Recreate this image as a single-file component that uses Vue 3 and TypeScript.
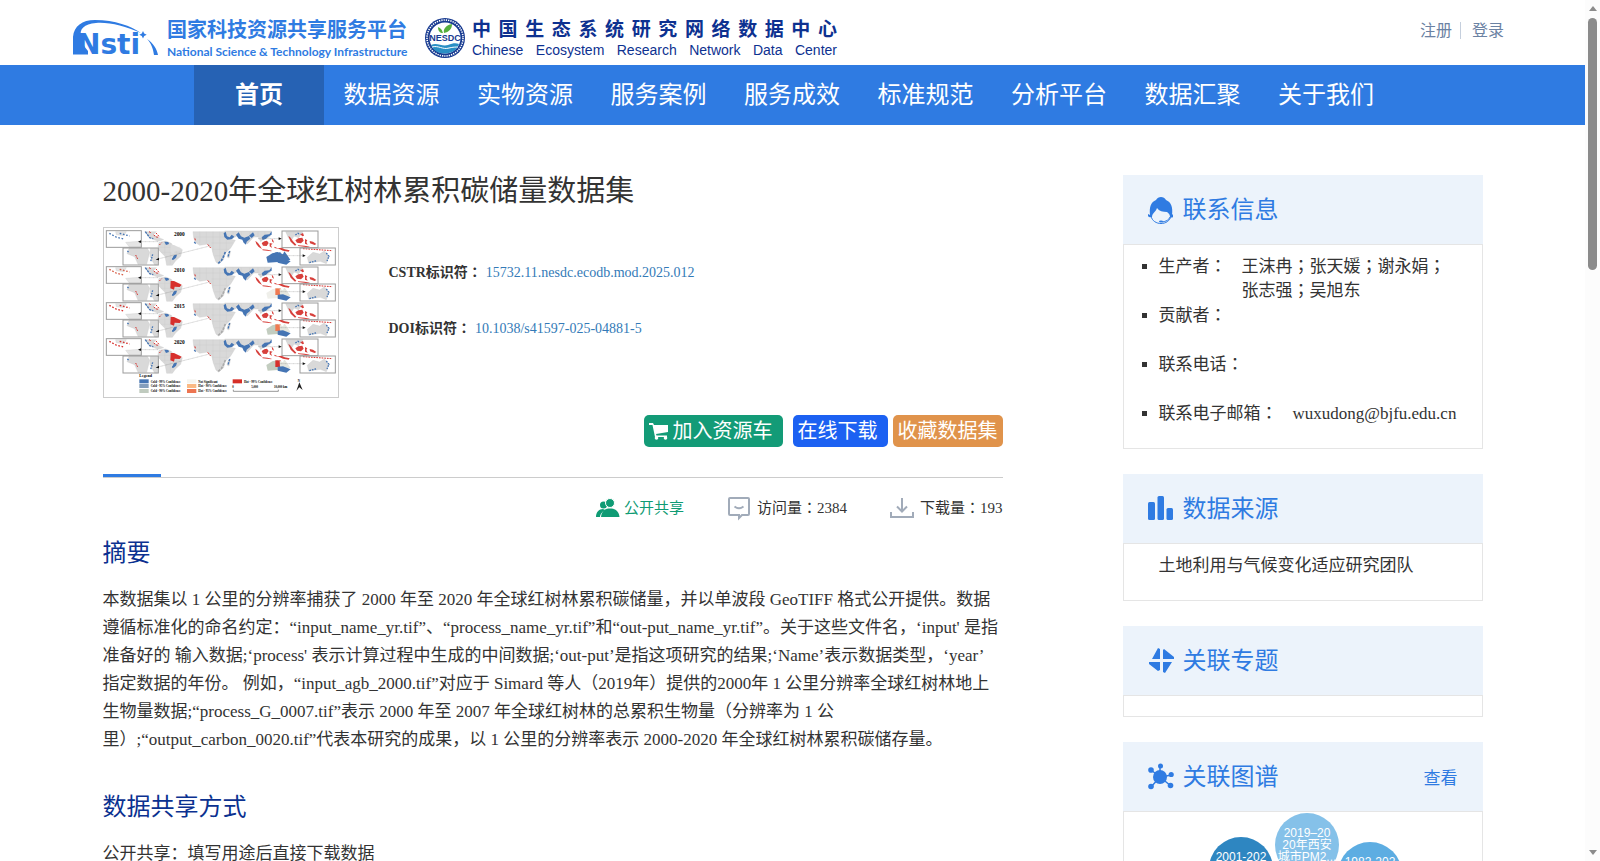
<script setup lang="ts">
interface Contact {
  label: string
  value: string
}
interface Bubble {
  x: number
  y: number
  fill: string
  lines: string[]
}
interface MapRow {
  year: string
  brazil: string
  west: string
  middle: string
  south: string
  inset: string
}

const menu: string[] = ['首页', '数据资源', '实物资源', '服务案例', '服务成效', '标准规范', '分析平台', '数据汇聚', '关于我们']

const contacts: Contact[] = [
  { label: '生产者：', value: '王沫冉；张天媛；谢永娟；张志强；吴旭东' },
  { label: '贡献者：', value: '' },
  { label: '联系电话：', value: '' },
  { label: '联系电子邮箱：', value: 'wuxudong@bjfu.edu.cn' },
]

const bubbles: Bubble[] = [
  { x: 117, y: 57, fill: '#2e86c1', lines: ['2001-202'] },
  { x: 183, y: 33, fill: '#85c1e9', lines: ['2019–20', '20年西安', '城市PM2...'] },
  { x: 246, y: 62, fill: '#5dade2', lines: ['1982-202'] },
]

const mapRows: MapRow[] = [
  { year: '2000', brazil: '#dcdcdc', west: '#4575b4', middle: '#4575b4', south: '#4575b4', inset: '#4575b4' },
  { year: '2010', brazil: '#d7302c', west: '#efefea', middle: '#ef7a52', south: '#4575b4', inset: '#d7604a' },
  { year: '2015', brazil: '#d7302c', west: '#c3cdc0', middle: '#ef7a52', south: '#4575b4', inset: '#d7302c' },
  { year: '2020', brazil: '#d7302c', west: '#c3cdc0', middle: '#d7302c', south: '#4575b4', inset: '#d7302c' },
]

const legend = [
  { x: 149, y: 493, fill: '#4575b4', text: 'Cold - 99% Confidence' },
  { x: 149, y: 507, fill: '#849ebc', text: 'Cold - 95% Confidence' },
  { x: 149, y: 522, fill: '#c0cbbf', text: 'Cold - 90% Confidence' },
  { x: 292, y: 493, fill: '#f5f5f0', text: 'Not Significant' },
  { x: 292, y: 507, fill: '#fab984', text: 'Hot - 90% Confidence' },
  { x: 292, y: 522, fill: '#ed7551', text: 'Hot - 95% Confidence' },
  { x: 429, y: 493, fill: '#d62f27', text: 'Hot - 99% Confidence' },
]
</script>

<template>
  <div class="shell">
    <div class="page">
      <header class="top">
        <div class="brands">
          <a class="brand" href="#">
            <svg class="nsti" viewBox="0 0 86 36" width="86" height="36" aria-hidden="true">
              <path d="M0 34.500V17C1 6 9 0 22 0C42 0 58 6 68 13C52 6 36 2 23 3C11 4 6 9 8 17C9 22 11 27 15 31V34.500Z" fill="#2f7be2" />
              <text x="4" y="34" class="nsti-word">Nsti</text>
              <path d="M70 11l1.200 2.500 2.500 1.200-2.500 1.200L70 18.500l-1.200-2.600-2.500-1.200 2.500-1.200Z" fill="#2f7be2" />
              <path d="M74 19C80 23 84 29 85 35H81C80 28 78 23 74 19Z" fill="#2f7be2" />
            </svg>
            <span class="platform">
              <strong>国家科技资源共享服务平台</strong>
              <span>National Science &amp; Technology Infrastructure</span>
            </span>
          </a>
          <a class="brand" href="#">
            <svg class="seal" viewBox="0 0 40 40" width="40" height="40" aria-hidden="true">
              <circle cx="20" cy="20" r="20" fill="#173a90" />
              <circle cx="20" cy="20" r="18" fill="none" stroke="#fff" stroke-width="1.6" stroke-dasharray="1.3 1" />
              <circle cx="20" cy="20" r="15.5" fill="#fff" />
              <path d="M6 27C12 24 17 29 23 27C28 25 31 25 34 26C32 32 27 35.500 20 35.500C13 35.500 8 32 6 27Z" fill="#2a8fc4" />
              <path d="M7 29C13 27 18 32 24 30C28 29 31 29 33 29" fill="none" stroke="#fff" />
              <path d="M19 15C18 11 21 7 27 6C27 11 24 14 19 15ZM18 15C17 11 15 10 13 9C13 13 15 15 18 15Z" fill="#55ae3d" />
              <text x="20" y="23" text-anchor="middle" class="seal-word">NESDC</text>
            </svg>
            <span class="center-name">
              <strong>中国生态系统研究网络数据中心</strong>
              <span>Chinese Ecosystem Research Network Data Center</span>
            </span>
          </a>
        </div>
        <div class="account">
          <a href="#">注册</a>
          <a href="#">登录</a>
        </div>
      </header>

      <nav class="nav" aria-label="主导航">
        <ul>
          <li v-for="(item, i) in menu" :key="item" :class="{ active: i === 0 }"><a href="#">{{ item }}</a></li>
        </ul>
      </nav>

      <main class="content">
        <article>
          <h1>2000-2020年全球红树林累积碳储量数据集</h1>
          <div class="summary">
            <svg class="thumb" viewBox="43 39 702 507" role="img" aria-label="全球红树林分布图">
              <g v-for="(row, i) in mapRows" :key="row.year" :transform="`translate(0 ${i * 108})`">
                <g fill="#d9d9d9" stroke="#c4c4c4" stroke-width="1">
                  <path d="M165 50H200L190 60L202 65L222 74L205 79L180 68Z" />
                  <path d="M208 82L228 78L245 85L252 95L278 104L273 124L258 137L248 151H231L226 124L210 108L205 94Z" />
                  <path d="M310 50H405L418 72L437 76L423 99L406 116L402 134L386 147L379 141L371 120L366 98L354 87L330 91L317 82L312 68Z" />
                  <path d="M405 48H545L540 66L522 72L513 80L506 66L492 66L473 87L460 70L442 63L420 74L407 61Z" />
                  <path d="M415 113L423 108L418 129L412 126Z" />
                  <path d="M118 100H173L180 112L171 148H145L135 125L112 116ZM182 100H204V150H195L181 125Z" />
                  <path d="M653 127L670 112L690 117L704 108L718 124L710 146L692 139L657 144Z" />
                  <path d="M588 50H640L627 68L613 63L604 78L596 68Z" />
                  <path d="M78 50H110L103 62L80 59ZM108 82L150 79L154 96H119Z" fill="#e5e5e5" />
                </g>
                <path d="M330 50V86M350 50V86M370 50V112M390 50V140M410 66V108M313 66H415M365 84H430M370 103H418M375 122H402M430 50V64M455 50V66M480 50V76M505 50V65M525 50V70M225 82V118M242 84V148M260 100V132M208 97H272M214 112H274" stroke="#cbcbcb" fill="none" />
                <path d="M243 90L253 90L276 101L270 108L255 107L253 116L242 112Z" :fill="row.brazil" />
                <path d="M530 126L548 115L565 111V141L534 143Z" :fill="row.west" />
                <path d="M557 112L573 112V132H557Z" :fill="row.middle" />
                <path d="M570 113L580 118L584 109L593 121L602 134L595 137L571 131Z" :fill="i ? '#e5e7df' : row.south" />
                <path d="M564 131L580 130L603 139L590 149L564 143Z" :fill="row.south" />
                <g fill="#4575b4">
                  <path d="M402 55l6-5 4 14 8 3 6-8 8 6-7 7-14 2-9-8ZM439 59l8-7 7 12 10 4 14-5 4 8-11 9-2 9-7-6-4-9-11-3ZM478 62l12-10 5 9-9 8ZM516 67l9-8 14-1 7-9v10l-9 5-9 8-9 3Z" />
                  <path d="M224 80l12 1 2 6-9 3ZM253 121l9-2-3 9-7 6-5-2Z" />
                </g>
                <g fill="none">
                  <path d="M167 50l6 8 7 10 11 3M256 122l-8 12M318 86l-6-8M420 108l-5 18" stroke="#4575b4" stroke-width="4" stroke-dasharray="7 3" />
                  <path d="M407 111L401 126L395 137L385 146" :stroke="i ? '#aaa' : '#4575b4'" stroke-width="5" stroke-dasharray="8 3" />
                  <path d="M354 88l9 11M317 76l-2-9M178 50l7 4M192 60l10 7 6-2" stroke="#d7302c" stroke-width="3" stroke-dasharray="6 3" />
                  <path d="M59 55L81 67L103 72M90 55L120 63" :stroke="row.inset" stroke-width="4" stroke-dasharray="5 5" />
                  <path d="M113 108L119 113M189 118L183 140M659 143L681 137M710 114L718 124L712 138M617 60l8-5 7 3" stroke="#4575b4" stroke-width="4" stroke-dasharray="5 3" />
                  <path d="M138 120L145 134M640 101L728 107M199 54L208 64M209 90L216 83" stroke="#d7302c" stroke-width="3" stroke-dasharray="5 3" />
                </g>
                <g fill="#d7403c">
                  <path d="M497 77l8 7 7 10 5 8-10-6-7-9ZM516 84l8-5 8-2 5 7-6 9-11-1ZM540 84l9 2-5 4 3 9-7-5ZM518 103l15 1 13 3-1 2-26-3ZM555 95l9 5 12-2 9 5 15 3-3 4-17-3-13-6-13-2ZM546 72l4 2 3 9-5-3Z" />
                  <path d="M596 63l5 3 9 13 10 10-4 3-13-12ZM617 76l9-6 12-2 4 9-8 8-12-2ZM646 72l7 4-3 5 4 8-8-3ZM660 78l10 2 10 7-5 3-14-5ZM625 91l20 1 16 3-6 2-30-4ZM632 58l8-4 3 8-5 2Z" />
                </g>
                <g fill="none" stroke="#9b9b9b" stroke-width="3">
                  <rect x="50" y="47" width="105" height="50" />
                  <rect x="100" y="99" width="106" height="51" />
                  <rect x="577" y="48" width="108" height="50" />
                  <rect x="631" y="99" width="106" height="51" />
                </g>
                <path d="M205 80H150M360 93L205 132M505 71H569M570 122H643" fill="none" stroke="#777" stroke-width="1" stroke-dasharray="3 1" />
                <path d="M145 80l9-4v8zM198 134l10-6v8zM576 71l-9-4v8zM648 122l-9-4v8z" fill="#111" />
                <text x="253" y="63" class="map-year">{{ row.year }}</text>
              </g>
              <text x="149" y="485" class="map-legend">Legend</text>
              <g v-for="entry in legend" :key="entry.text">
                <rect :x="entry.x" :y="entry.y" width="28" height="12" :fill="entry.fill" />
                <text :x="entry.x + 34" :y="entry.y + 10" class="map-key">{{ entry.text }}</text>
              </g>
              <path d="M431 524V529H566V524" fill="none" stroke="#666" stroke-width="2" />
              <text x="428" y="518" class="map-key">0</text>
              <text x="485" y="518" class="map-key">5,000</text>
              <text x="553" y="518" class="map-key">10,000 km</text>
              <text x="624" y="500" class="map-key">N</text>
              <path d="M620 528L629 502L639 525L629 517Z" fill="#222" />
            </svg>
            <dl class="ids">
              <div><dt>CSTR标识符：</dt><dd><a href="#">15732.11.nesdc.ecodb.mod.2025.012</a></dd></div>
              <div><dt>DOI标识符：</dt><dd><a href="#">10.1038/s41597-025-04881-5</a></dd></div>
            </dl>
          </div>

          <div class="actions">
            <button class="cart" type="button">
              <svg viewBox="0 0 20 18" width="20" height="18" aria-hidden="true">
                <path d="M0 1H4L5 3H19V10L7 12L7.500 13.500H18V15H6L3.500 3H0Z" fill="#fff" />
                <circle cx="7.500" cy="16" r="1.800" fill="#fff" /><circle cx="16.500" cy="16" r="1.800" fill="#fff" />
              </svg>
              加入资源车
            </button>
            <button class="download" type="button">在线下载</button>
            <button class="favorite" type="button">收藏数据集</button>
          </div>

          <div class="rule"></div>

          <div class="stats">
            <span class="open">
              <svg viewBox="0 0 24 20" width="24" height="20" aria-hidden="true">
                <g fill="#0f9b74">
                  <circle cx="7.500" cy="7" r="3.500" /><path d="M0 19C0 14 3 11 7 11L9 12C6 14 4 16 4 19Z" />
                  <circle cx="14" cy="5" r="4.500" stroke="#fff" /><path d="M5 19C5.500 13 9 10.500 14 10.500S23 13 23.500 19Z" />
                </g>
              </svg>
              公开共享
            </span>
            <span>
              <svg viewBox="0 0 24 24" width="24" height="24" aria-hidden="true">
                <path d="M3 2H21Q22 2 22 3V18Q22 19 21 19H15L12 22V19H3Q2 19 2 18V3Q2 2 3 2Z" fill="none" stroke="#a1abb9" stroke-width="2" />
                <path d="M7.500 10.500Q12 14 16.500 10.500" fill="none" stroke="#a1abb9" stroke-width="2" />
              </svg>
              访问量：2384
            </span>
            <span>
              <svg viewBox="0 0 24 22" width="24" height="22" aria-hidden="true">
                <path d="M1 15V20H23V15M12 1V14M7 9.500L12 14.500L17 9.500" fill="none" stroke="#a1abb9" stroke-width="2" />
              </svg>
              下载量：193
            </span>
          </div>

          <section>
            <h2>摘要</h2>
            <p>本数据集以 1 公里的分辨率捕获了 2000 年至 2020 年全球红树林累积碳储量，并以单波段 GeoTIFF 格式公开提供。数据遵循标准化的命名约定：“input_name_yr.tif”、“process_name_yr.tif”和“out-put_name_yr.tif”。关于这些文件名，‘input' 是指准备好的 输入数据;‘process' 表示计算过程中生成的中间数据;‘out-put’是指这项研究的结果;‘Name’表示数据类型，‘year’ 指定数据的年份。 例如，“input_agb_2000.tif”对应于 Simard 等人（2019年）提供的2000年 1 公里分辨率全球红树林地上生物量数据;“process_G_0007.tif”表示 2000 年至 2007 年全球红树林的总累积生物量（分辨率为 1 公里）;“output_carbon_0020.tif”代表本研究的成果，以 1 公里的分辨率表示 2000-2020 年全球红树林累积碳储存量。</p>
          </section>
          <section>
            <h2>数据共享方式</h2>
            <p>公开共享：填写用途后直接下载数据</p>
          </section>
        </article>

        <aside>
          <section class="card">
            <header>
              <svg viewBox="0 0 26 30" width="26" height="30" aria-hidden="true">
                <path d="M2 19C1 11 3 6 8 4C10 0 16 0 18 4C23 6 25 11 24 19L25 18V21Q24 22 22 21C22 18 20 17 19 16C15 16 11 15 9 12C8 16 4 17 4 21Q1 22 0 20V18Z" fill="#2f7be2" />
                <path d="M3 20C5 30 21 30 23 20M22 21C21 24 18 25.500 14 26" fill="none" stroke="#2f7be2" />
                <ellipse cx="13" cy="25.500" rx="2" ry="1" fill="#2f7be2" />
              </svg>
              <h3>联系信息</h3>
            </header>
            <ul class="body contacts">
              <li v-for="c in contacts" :key="c.label">
                <span class="label">{{ c.label }}</span><span class="value">{{ c.value }}</span>
              </li>
            </ul>
          </section>

          <section class="card">
            <header>
              <svg viewBox="0 0 26 30" width="26" height="30" aria-hidden="true">
                <g fill="#2f7be2"><rect y="7" width="7" height="18" rx="1.500" /><rect x="9.500" y="1" width="6.500" height="24" rx="1.500" /><rect x="18.500" y="13" width="6.500" height="12" rx="1.500" /></g>
              </svg>
              <h3>数据来源</h3>
            </header>
            <div class="body source">土地利用与气候变化适应研究团队</div>
          </section>

          <section class="card">
            <header>
              <svg viewBox="0 0 26 30" width="26" height="30" aria-hidden="true">
                <path d="M4 12L10 1L12 2V12ZM15 3L16 2L26 10V12H15ZM1 15H12V23L10 24L1 17ZM15 15H24L17 26L15 25Z" fill="#2f7be2" />
              </svg>
              <h3>关联专题</h3>
            </header>
            <div class="body blank"></div>
          </section>

          <section class="card">
            <header>
              <svg viewBox="0 0 26 30" width="26" height="30" aria-hidden="true">
                <path d="M12 14V3M12 14L3 7M12 14L24 12M12 14L3 24M12 14L23 23" stroke="#2f7be2" stroke-width="1.500" />
                <g fill="#2f7be2"><circle cx="12" cy="14" r="7" /><circle cx="12.500" cy="3" r="2.500" /><circle cx="3" cy="7" r="2.800" /><circle cx="23.200" cy="11.500" r="2.600" /><circle cx="3" cy="23.500" r="2.800" /><circle cx="22.500" cy="22.500" r="2.800" /></g>
              </svg>
              <h3>关联图谱</h3>
              <a href="#">查看</a>
            </header>
            <div class="body graph">
              <svg viewBox="0 0 358 300" width="100%" height="300">
                <g v-for="b in bubbles" :key="b.x">
                  <circle :cx="b.x" :cy="b.y" r="32" :fill="b.fill" />
                  <text v-for="(line, n) in b.lines" :key="line" :x="b.x" :y="b.y - 8 + n * 12" text-anchor="middle">{{ line }}</text>
                </g>
              </svg>
            </div>
          </section>
        </aside>
      </main>
    </div>

    <div class="scroll" aria-hidden="true">
      <i class="up"></i>
      <i class="thumb-bar"></i>
      <i class="down"></i>
    </div>
  </div>
</template>

<style>
body {
  margin: 0;
  background: #fff;
}
</style>

<style scoped>
* {
  box-sizing: border-box;
}
.shell {
  display: grid;
  grid-template-columns: minmax(0, 1fr) 15px;
  height: 100vh;
  overflow: hidden;
  color: #333;
  font-family: "Liberation Serif", "Noto Sans CJK SC", serif;
  font-size: 17px;
}
.page {
  min-width: 0;
  overflow: hidden;
}
a {
  color: inherit;
  text-decoration: none;
}
h1,
h2,
h3,
p,
ul,
dl,
dd {
  margin: 0;
  padding: 0;
  font-weight: 400;
}
ul {
  list-style: none;
}
svg {
  display: block;
  flex: none;
  overflow: visible;
}

.top {
  display: flex;
  justify-content: space-between;
  align-items: flex-start;
  height: 65px;
  padding: 17px 81px 0 73px;
}
.brands,
.brand {
  display: flex;
}
.brands {
  gap: 12px;
}
.nsti {
  margin: 3px 8px 0 0;
}
.nsti-word {
  fill: #2f7be2;
  font: 700 28px "DejaVu Sans", sans-serif;
}
.platform,
.center-name {
  display: flex;
  flex-direction: column;
  white-space: nowrap;
}
.platform {
  width: 246px;
  color: #2f7be2;
  font-family: Lato, "Noto Sans CJK SC", sans-serif;
}
.platform strong {
  font-size: 20px;
  line-height: 25px;
}
.platform span {
  font-size: 12px;
  font-weight: 700;
  line-height: 20px;
}
.seal {
  margin: 1px 7px 0 0;
}
.seal-word {
  fill: #173a90;
  font: 700 9px "Liberation Sans", sans-serif;
}
.center-name {
  width: 365px;
  color: #0d3190;
  font-family: "Liberation Sans", "Noto Sans CJK SC", sans-serif;
}
.center-name strong {
  font-size: 19px;
  line-height: 25px;
  text-align-last: justify;
}
.center-name span {
  font-size: 14px;
  line-height: 17px;
  text-align-last: justify;
}
.account {
  display: flex;
  color: #6b82a3;
  font-size: 16px;
  line-height: 17px;
  padding-top: 5px;
}
.account a + a {
  margin-left: 8px;
  padding-left: 11px;
  border-left: 1px solid #c5cfdd;
}

.nav {
  background: #2f7be2;
  color: #fff;
}
.nav ul {
  display: flex;
  justify-content: space-between;
  width: 1197px;
  max-width: 100%;
  margin: 0 auto;
  padding-right: 17px;
}
.nav li {
  font-size: 24px;
  line-height: 60px;
  white-space: nowrap;
}
.nav .active {
  width: 130px;
  margin-right: -18px;
  background: #2662b4;
  font-weight: 700;
  text-align: center;
}

.content {
  display: grid;
  grid-template-columns: minmax(0, 1fr) 360px;
  gap: 120px;
  max-width: 1380px;
  margin: 50px auto 0;
}
h1 {
  font-size: 29px;
  line-height: 32px;
}
.summary {
  display: flex;
  gap: 50px;
  margin-top: 20px;
}
.thumb {
  width: 236px;
  height: 171px;
  border: 1px solid #ccc;
}
.map-year {
  font: 700 16px "Liberation Serif", serif;
}
.map-legend {
  font: 700 12px "Liberation Serif", serif;
}
.map-key {
  font: 700 9px "Liberation Serif", serif;
}
.ids,
.stats,
.contacts {
  font-family: "Liberation Serif", "Noto Sans CJK JP", serif;
}
.ids {
  padding-top: 36px;
  font-size: 14px;
  line-height: 20px;
}
.ids div {
  display: flex;
  gap: 4px;
  margin-bottom: 36px;
}
.ids div:last-child {
  margin-bottom: 0;
}
.ids dt {
  font-weight: 700;
}
.ids dd {
  color: #337ab7;
}
.actions {
  display: flex;
  justify-content: flex-end;
  margin-top: 17px;
}
.actions button {
  display: flex;
  align-items: center;
  gap: 4px;
  height: 32px;
  padding: 0 5px;
  border: 0;
  border-radius: 5px;
  color: #fff;
  font-family: inherit;
  font-size: 20px;
  line-height: 32px;
  white-space: nowrap;
}
.actions .cart {
  padding-right: 10px;
  margin-right: 10px;
  background: #139b77;
}
.actions .download {
  padding-right: 10px;
  margin-right: 5px;
  background: #1c61f2;
}
.actions .favorite {
  background: #e0934b;
}
.rule {
  height: 4px;
  margin-top: 27px;
  border-bottom: 1px solid #ccc;
  background: linear-gradient(#2f7be2, #2f7be2) no-repeat left / 58px 3px;
}
.stats {
  display: flex;
  justify-content: flex-end;
  gap: 43px;
  height: 24px;
  margin-top: 18px;
  font-size: 15px;
  line-height: 24px;
}
.stats span {
  display: flex;
  align-items: center;
  gap: 6px;
}
.stats .open {
  gap: 4px;
  color: #0f9b74;
}
h2 {
  margin-top: 17px;
  color: #0b3190;
  font-size: 24px;
  line-height: 32px;
}
article p {
  margin: 17px 0 37px;
  line-height: 28px;
}

.card {
  margin-bottom: 25px;
}
.card header {
  display: flex;
  align-items: center;
  height: 69px;
  padding: 0 25px;
  background: #ecf3fb;
  color: #2f7be2;
}
.card header svg {
  margin: 2px 9px 0 0;
}
h3 {
  flex: 1;
  font-size: 24px;
  line-height: 32px;
}
.body {
  border: 1px solid #e5e5e5;
}
.contacts {
  padding: 10px 22px 0 18px;
}
.contacts li {
  display: flex;
  min-height: 48px;
  margin-bottom: 1px;
  line-height: 24px;
}
.contacts li:last-child {
  min-height: 46px;
  margin-bottom: 0;
}
.contacts li::before {
  content: "";
  flex: none;
  width: 5px;
  height: 5px;
  margin: 9px 12px 0 0;
  background: #333;
}
.contacts .label {
  flex: none;
}
.contacts .value {
  flex: 1;
  margin-left: 15px;
}
.source {
  padding: 10px 35px 22px;
  line-height: 24px;
}
.blank {
  height: 22px;
}
.graph text {
  fill: #fff;
  font: 12px "Liberation Sans", "Noto Sans CJK SC", sans-serif;
}

.scroll {
  display: flex;
  flex-direction: column;
  align-items: center;
  padding: 6px 0;
  background: #fcfcfc;
}
.up,
.down {
  border: 4px solid transparent;
}
.up {
  border-top: 0;
  border-bottom: 5px solid #8b8b8b;
}
.down {
  margin-top: auto;
  border-bottom: 0;
  border-top: 5px solid #8b8b8b;
}
.thumb-bar {
  width: 9px;
  height: 252px;
  margin-top: 7px;
  border-radius: 5px;
  background: #8b8b8b;
}
</style>
